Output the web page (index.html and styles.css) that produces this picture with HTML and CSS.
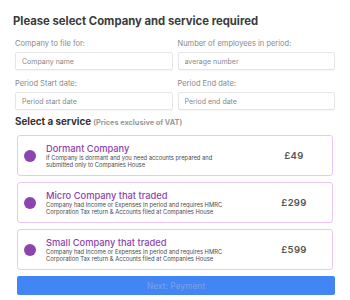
FILE: index.html
```html
<!DOCTYPE html>
<html>
<head>
<meta charset="utf-8">
<link rel="stylesheet" href="styles.css">
</head>
<body>
<div class="page">
  <h1 class="title">Please select Company and service required</h1>
  <div class="grid">
    <div class="field">
      <label class="label">Company to file for:</label>
      <input class="input" placeholder="Company name">
    </div>
    <div class="field">
      <label class="label">Number of employees in period:</label>
      <input class="input" placeholder="average number">
    </div>
    <div class="field">
      <label class="label">Period Start date:</label>
      <input class="input" placeholder="Period start date">
    </div>
    <div class="field">
      <label class="label">Period End date:</label>
      <input class="input" placeholder="Period end date">
    </div>
  </div>
  <h2 class="section">Select a service <span class="note">(Prices exclusive of VAT)</span></h2>
  <div class="cards">
    <div class="card">
      <span class="radio"></span>
      <div class="info">
        <div class="name">Dormant Company</div>
        <div class="desc">If Company is dormant and you need accounts prepared and<br>submitted only to Companies House</div>
      </div>
      <div class="price">£49</div>
    </div>
    <div class="card">
      <span class="radio"></span>
      <div class="info">
        <div class="name">Micro Company that traded</div>
        <div class="desc">Company had Income or Expenses in period and requires HMRC<br>Corporation Tax return &amp; Accounts filed at Companies House</div>
      </div>
      <div class="price">£299</div>
    </div>
    <div class="card">
      <span class="radio"></span>
      <div class="info">
        <div class="name">Small Company that traded</div>
        <div class="desc">Company had Income or Expenses in period and requires HMRC<br>Corporation Tax return &amp; Accounts filed at Companies House</div>
      </div>
      <div class="price">£599</div>
    </div>
  </div>
  <button class="next">Next: Payment</button>
</div>
</body>
</html>
```
FILE: styles.css
```css
* { box-sizing: border-box; }
html, body { margin: 0; padding: 0; background: #fff; }
body { font-family: Inter, "Noto Sans", sans-serif; color: #333; }
.page { padding: 13px 15px 0 15px; width: 350px; }
.title { margin: 0 0 0 -2px; font-size: 11.3px; line-height: 16px; font-weight: 700; color: #3b3b3b; }
.grid { display: grid; grid-template-columns: 1fr 1fr; column-gap: 5px; row-gap: 9px; margin-top: 10px; }
.field { display: flex; flex-direction: column; }
.label { font-size: 7.5px; line-height: 10px; color: #888; margin-bottom: 3px; }
.input { height: 18px; border: 1px solid #e6e6e6; border-radius: 2px; padding: 0 6px; font-family: inherit; font-size: 7px; color: #333; box-shadow: 0 1px 1px rgba(0,0,0,0.04); outline: none; }
.input::placeholder { color: #888; }
.section { margin: 5px 0 0 0; font-size: 9.8px; line-height: 13px; font-weight: 700; color: #333; }
.note { font-size: 7.3px; color: #999; font-weight: 700; }
.cards { display: flex; flex-direction: column; gap: 6px; margin: 6px 2px 0 2px; }
.card { height: 41px; border: 1px solid #ecc6f7; border-radius: 3px; display: flex; align-items: center; padding: 0 0 0 6px; }
.radio { width: 12px; height: 12px; border-radius: 50%; background: #8e44ad; flex: none; }
.info { margin-left: 10px; flex: 1; }
.name { font-size: 9.3px; line-height: 11px; color: #8e44ad; font-weight: 500; }
.desc { font-size: 5.8px; line-height: 7.5px; color: #4a4a4a; }
.price { width: 60px; margin-right: 8px; text-align: center; font-size: 9.5px; font-weight: 600; color: #555; letter-spacing: 0.3px; }
.next { display: block; margin: 6px 0 0 2px; width: 318px; height: 19px; border: none; border-radius: 2px; background: #4285f4; color: #769ee8; font-family: inherit; font-size: 8.4px; font-weight: 500; }
```
